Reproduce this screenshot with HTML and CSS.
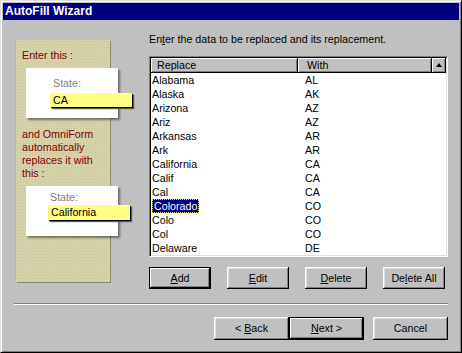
FILE: index.html
```html
<!DOCTYPE html>
<html lang="en">
<head>
  <meta charset="UTF-8"/>
  <title>AutoFill Wizard</title>
  <link rel="stylesheet" href="styles.css">
</head>
<body>
  <div class="window">
    <div class="titlebar">AutoFill Wizard</div>

    <div class="main">
      <div class="panel">
        <p class="hint">Enter this :</p>
        <div class="sample">
          <div class="sample-label">State:</div>
          <div class="sample-field">CA</div>
        </div>
        <p class="hint hint-second">and OmniForm<br>automatically<br>replaces it with<br>this :</p>
        <div class="sample sample-result">
          <div class="sample-label">State:</div>
          <div class="sample-field">California</div>
        </div>
      </div>

      <div class="content">
        <p class="intro">En<u>t</u>er the data to be replaced and its replacement.</p>
        <div class="listbox">
          <div class="list-head">
            <div class="head-cell head-replace">Replace</div>
            <div class="head-cell head-with">With</div>
            <div class="head-cell scroll-btn"><span class="arrow-up"></span></div>
          </div>
          <div class="row"><div class="cell-name">Alabama</div><div class="cell-code">AL</div></div>
          <div class="row"><div class="cell-name">Alaska</div><div class="cell-code">AK</div></div>
          <div class="row"><div class="cell-name">Arizona</div><div class="cell-code">AZ</div></div>
          <div class="row"><div class="cell-name">Ariz</div><div class="cell-code">AZ</div></div>
          <div class="row"><div class="cell-name">Arkansas</div><div class="cell-code">AR</div></div>
          <div class="row"><div class="cell-name">Ark</div><div class="cell-code">AR</div></div>
          <div class="row"><div class="cell-name">California</div><div class="cell-code">CA</div></div>
          <div class="row"><div class="cell-name">Calif</div><div class="cell-code">CA</div></div>
          <div class="row"><div class="cell-name">Cal</div><div class="cell-code">CA</div></div>
          <div class="row"><div class="cell-name"><span class="selected">Colorado</span></div><div class="cell-code">CO</div></div>
          <div class="row"><div class="cell-name">Colo</div><div class="cell-code">CO</div></div>
          <div class="row"><div class="cell-name">Col</div><div class="cell-code">CO</div></div>
          <div class="row"><div class="cell-name">Delaware</div><div class="cell-code">DE</div></div>
        </div>
        <div class="actions">
          <button class="btn btn-default"><u>A</u>dd</button>
          <button class="btn"><u>E</u>dit</button>
          <button class="btn"><u>D</u>elete</button>
          <button class="btn">De<u>l</u>ete All</button>
        </div>
      </div>
    </div>

    <div class="divider"></div>

    <div class="footer">
      <button class="btn btn-wide">&lt; <u>B</u>ack</button>
      <button class="btn btn-wide btn-default"><u>N</u>ext &gt;</button>
      <button class="btn btn-wide btn-cancel">Cancel</button>
    </div>
  </div>
</body>
</html>
```

FILE: styles.css
```css
body { margin: 0; font: 10.7px/13px "Liberation Sans", Arial, sans-serif; color: #000; }

.window { width: 462px; height: 353px; box-sizing: border-box; padding: 2px; background: #c0c0c0; border: 1px solid; border-color: #dfdfdf #000 #000 #dfdfdf; box-shadow: inset 1px 1px #fff, inset -1px -1px #808080; }
.titlebar { height: 17px; padding-left: 2px; background: #000080; color: #fff; font-weight: bold; font-size: 12px; line-height: 17px; }

.main { display: flex; height: 269px; padding-left: 13px; }

/* left illustration */
.panel { margin-top: 20px; width: 94px; height: 242px; box-sizing: border-box; padding: 9px 0 0 6px; background-color: #d5d1a9; background-image: radial-gradient(#c8c49b 0.6px, transparent 0.8px); background-size: 3px 3px; box-shadow: 1px 1px 0 #8c8a6c, -1px 0 0 #bcb893; }
.hint { margin: 0; color: #800000; }
.hint-second { margin-top: 10px; }
.sample { margin: 6px 0 0 4px; width: 92px; height: 50px; box-sizing: border-box; padding-top: 9px; background: #fff; box-shadow: 2px 2px 2px rgba(0, 0, 0, 0.45); }
.sample-label { padding-left: 27px; color: #808080; }
.sample-field { margin: 3px 0 0 24px; width: 82px; height: 14px; box-sizing: border-box; padding-left: 3px; line-height: 14px; background: #ffff80; box-shadow: 1px 1px 0 #000, 2px 2px 1px #555; }
.sample-result { padding-top: 5px; }
.sample-result .sample-label { padding-left: 24px; }
.sample-result .sample-field { margin: 1px 0 0 22px; height: 15px; line-height: 15px; }

/* right side */
.content { margin-left: 39px; padding-top: 13px; width: 299px; }
.intro { margin: 0; }

.listbox { margin-top: 10px; height: 201px; box-sizing: border-box; padding: 1px; background: #fff; border: 1px solid; border-color: #808080 #fff #fff #808080; box-shadow: inset 1px 1px #000, inset -1px -1px #dfdfdf; overflow: hidden; }
.list-head { display: flex; height: 15px; }
.head-cell { box-sizing: border-box; line-height: 15px; background: #c0c0c0; box-shadow: inset -1px -1px #000, inset 1px 1px #fff, inset -2px -2px #808080; }
.head-replace { width: 147px; padding-left: 6px; }
.head-with { width: 134px; padding-left: 9px; }
.scroll-btn { width: 14px; display: flex; align-items: center; justify-content: center; padding-bottom: 1px; }
.arrow-up { width: 0; height: 0; border-left: 3px solid transparent; border-right: 3px solid transparent; border-bottom: 4px solid #000; }

.row { display: flex; height: 14px; line-height: 14px; }
.cell-name { width: 147px; box-sizing: border-box; padding-left: 1px; }
.cell-code { padding-left: 7px; }
.selected { display: inline-block; padding: 0 2px; background: #000080; color: #fff; outline: 1px dotted #e0e080; outline-offset: -1px; }

.actions { display: flex; gap: 16px; margin-top: 10px; }

.btn { width: 62px; height: 22px; padding: 0; border: 0; font: inherit; color: #000; background: #c0c0c0; box-shadow: inset -1px -1px #000, inset 1px 1px #fff, inset -2px -2px #808080, inset 2px 2px #dfdfdf; }
.btn-default { box-shadow: inset 0 0 0 1px #000, inset -2px -2px #000, inset 2px 2px #fff, inset -3px -3px #808080; }
.btn-wide { width: 75px; height: 23px; }
.btn-cancel { margin-left: 9px; }

.divider { margin: 14px 11px 0; border-top: 1px solid #808080; border-bottom: 1px solid #fff; }
.footer { display: flex; justify-content: flex-end; margin-top: 12px; padding-right: 11px; }
```
